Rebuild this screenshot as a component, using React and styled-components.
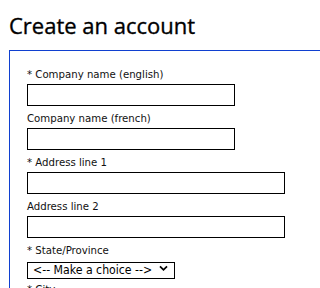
import React from "react";
import styled, { createGlobalStyle } from "styled-components";

const GlobalStyle = createGlobalStyle`
  body {
    margin: 0;
    background: #ffffff;
  }
`;

const fields = [
  { label: "* Company name (english)", wide: false },
  { label: "Company name (french)", wide: false },
  { label: "* Address line 1", wide: true },
  { label: "Address line 2", wide: true },
];

const App = () => {
  return (
    <Page>
      <GlobalStyle />
      <Title>Create an account</Title>
      <Panel>
        {fields.map((f) => (
          <Field key={f.label}>
            <Label>{f.label}</Label>
            <TextInput type="text" $wide={f.wide} />
          </Field>
        ))}
        <Field>
          <Label>* State/Province</Label>
          <SelectWrap>
            <Select defaultValue="">
              <option value="">&lt;-- Make a choice --&gt;</option>
            </Select>
            <Chevron viewBox="0 0 10 8">
              <path d="M1 1.5 L5 5.5 L9 1.5" fill="none" stroke="#000" strokeWidth="2" />
            </Chevron>
          </SelectWrap>
        </Field>
        <Field>
          <Label>* City</Label>
        </Field>
      </Panel>
    </Page>
  );
};

const Page = styled.div`
  padding: 10px 0 0 9px;
  height: 288px;
  overflow: hidden;
  box-sizing: border-box;
`;

const Title = styled.h1`
  margin: 0 0 10px 0;
  font-family: "Open Sans", sans-serif;
  font-weight: 400;
  font-size: 22px;
  line-height: 30px;
  color: #000;
  -webkit-text-stroke: 0.35px #000;
`;

const Panel = styled.div`
  border-top: 1px solid #1040d0;
  border-left: 1px solid #1040d0;
  padding: 17px 0 0 17px;
`;

const Field = styled.div`
  display: flex;
  flex-direction: column;
  align-items: flex-start;
  margin-bottom: 6px;
`;

const Label = styled.label`
  font-family: "DejaVu Sans Condensed", "DejaVu Sans", sans-serif;
  font-size: 11.3px;
  line-height: 13px;
  color: #111;
  margin-bottom: 3px;
`;

const TextInput = styled.input`
  box-sizing: border-box;
  width: ${(p) => (p.$wide ? "258px" : "208px")};
  height: 22px;
  border: 1px solid #000;
  border-radius: 0;
  margin: 0;
  padding: 2px 4px;
  outline: none;
`;

const SelectWrap = styled.div`
  position: relative;
  width: 148px;
  height: 17px;
`;

const Select = styled.select`
  appearance: none;
  box-sizing: border-box;
  width: 148px;
  height: 17px;
  border: 1px solid #000;
  border-radius: 0;
  margin: 0;
  padding: 0 0 0 5px;
  background: #fff;
  font-family: "DejaVu Sans Condensed", "DejaVu Sans", sans-serif;
  font-size: 12.2px;
  line-height: 15px;
  color: #000;
`;

const Chevron = styled.svg`
  position: absolute;
  right: 7px;
  top: 5px;
  width: 9px;
  height: 7px;
  pointer-events: none;
`;

export default App;
